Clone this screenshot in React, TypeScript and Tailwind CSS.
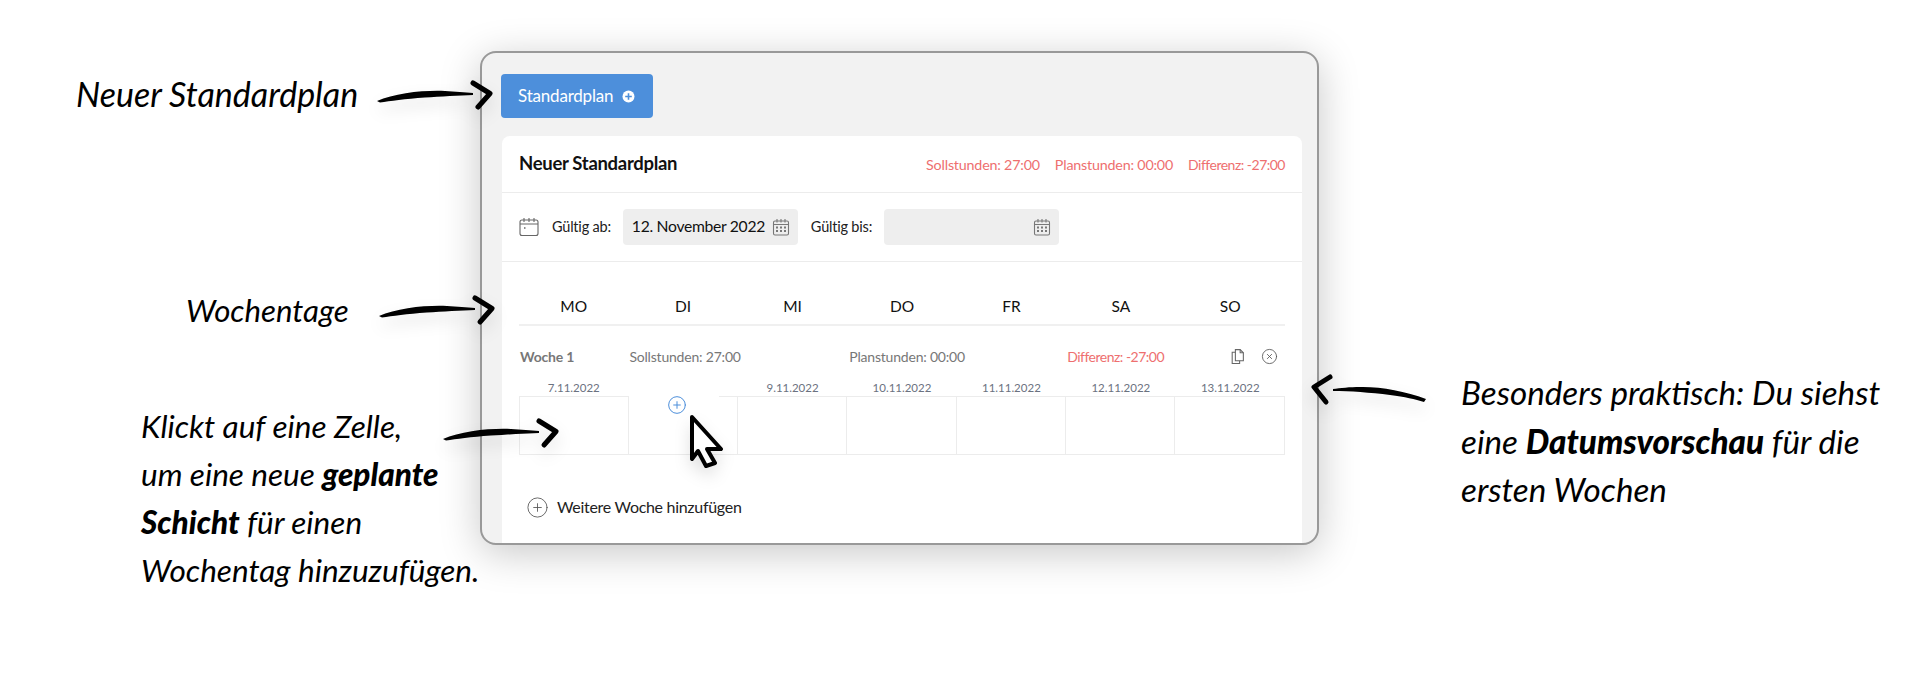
import React from 'react';
import { PlusCircle, XCircle } from 'lucide-react';

const days = ['MO', 'DI', 'MI', 'DO', 'FR', 'SA', 'SO'];
const dates = ['7.11.2022', '', '9.11.2022', '10.11.2022', '11.11.2022', '12.11.2022', '13.11.2022'];

const CalendarIcon = () => (
  <svg width="18" height="18" viewBox="0 0 18 18" fill="none" stroke="#777" strokeWidth="1.1" className="shrink-0">
    <rect x="1.5" y="3" width="15" height="14" rx="1.5" />
    <path d="M1.5 6.5h15M5 1v3.5M9 1v3.5M13 1v3.5" />
    <g fill="#777" stroke="none">
      <rect x="4" y="8.5" width="2" height="2" />
      <rect x="8" y="8.5" width="2" height="2" />
      <rect x="12" y="8.5" width="2" height="2" />
      <rect x="4" y="12" width="2" height="2" />
      <rect x="8" y="12" width="2" height="2" />
      <rect x="12" y="12" width="2" height="2" />
    </g>
  </svg>
);

const BrushArrow = ({ dx, dy }: { dx: number; dy: number }) => (
  <g transform={`translate(${dx} ${dy})`}>
    <path d="M377 101C395 93 425 90 445 91C455 91.500 465 92.500 473 93L473 95C460 95.500 440 96.500 425 97.500C405 99 390 101 380 102.500Z" />
    <path d="M473 83L490 93.500L478 107" fill="none" stroke="#000" strokeWidth="5" strokeLinecap="round" strokeLinejoin="round" />
  </g>
);

const App = () => {
  return (
    <div className="relative w-[1916px] h-[680px] bg-white overflow-hidden pt-[51px] pl-[480px] font-['Lato',sans-serif]">
      {/* App frame */}
      <div className="w-[839px] h-[494px] bg-[#f2f2f2] border-2 border-[#999] rounded-[16px] shadow-[0_8px_40px_rgba(0,0,0,0.22)] overflow-hidden pt-[21px] pl-[20px] pr-[14px]">
        <button className="flex items-center gap-[9px] -ml-px w-[152px] h-[44px] pl-[17px] bg-[#4d8fdb] rounded text-white text-[17px] tracking-[-0.2px]">
          Standardplan
          <svg width="13" height="13" viewBox="0 0 13 13">
            <circle cx="6.5" cy="6.5" r="6" fill="#fff" />
            <path d="M6.5 3.2v6.6M3.2 6.5h6.6" stroke="#4d8fdb" strokeWidth="1.6" />
          </svg>
        </button>

        <div className="mt-[18px] w-[800px] h-[420px] bg-white rounded-t-lg">
          {/* Header */}
          <div className="flex items-center justify-between h-[57px] pl-[17px] pr-[17px] border-b border-[#ececec]">
            <h1 className="text-[18.5px] font-bold text-[#111] tracking-[-0.3px]">Neuer Standardplan</h1>
            <div className="flex gap-[15px] text-[14.3px] tracking-[-0.2px] text-[#ee6f6f] mt-[2px]">
              <span>Sollstunden: 27:00</span>
              <span>Planstunden: 00:00</span>
              <span className="text-[14px] tracking-[-0.5px]">Differenz: -27:00</span>
            </div>
          </div>

          {/* Validity */}
          <div className="flex items-center h-[69px] pl-[17px] border-b border-[#ececec] text-[14.5px] tracking-[-0.2px] text-[#222]">
            <svg width="20" height="20" viewBox="0 0 20 20" fill="none" stroke="#666" strokeWidth="1.1">
              <rect x="1" y="3" width="18" height="15.5" rx="2" />
              <path d="M1 7h18M5 1v4M10 1v4M15 1v4" />
              <path d="M5 11h1.5" strokeWidth="1.5" />
            </svg>
            <span className="ml-[13px]">Gültig ab:</span>
            <div className="flex items-center justify-between ml-[12px] w-[175px] h-[36px] pl-[9px] pr-2 bg-[#eeeeee] rounded text-[15.7px] tracking-[-0.3px] text-[#111]">
              12. November 2022
              <CalendarIcon />
            </div>
            <span className="ml-[13px]">Gültig bis:</span>
            <div className="flex items-center justify-end ml-[12px] w-[175px] h-[36px] pr-2 bg-[#eeeeee] rounded">
              <CalendarIcon />
            </div>
          </div>

          <div className="px-[17px]">
            {/* Weekdays */}
            <div className="grid grid-cols-7 h-[64px] pt-[34px] border-b-2 border-[#f0f0f0] text-center text-[15.5px] leading-5 text-[#111]">
              {days.map((day) => (
                <div key={day}>{day}</div>
              ))}
            </div>

            {/* Week summary */}
            <div className="grid grid-cols-7 items-center mt-[20px] h-[20px] text-[14px] tracking-[-0.2px] text-[#777]">
              <div className="pl-[1px] font-bold">Woche 1</div>
              <div className="col-span-2 pl-[1px]">Sollstunden: 27:00</div>
              <div className="col-span-2 pl-[2px]">Planstunden: 00:00</div>
              <div className="text-[#ee6f6f] whitespace-nowrap pl-[1px] tracking-[-0.5px]">Differenz: -27:00</div>
              <div className="flex justify-end items-center gap-[15px] pr-[7px]">
                <svg width="17" height="17" viewBox="0 0 16 16" fill="none" stroke="#666" strokeWidth="1">
                  <path d="M6 1.500h4.500l3 3v7.500H6z" />
                  <path d="M10.500 1.500v3h3" />
                  <path d="M6 4H3v10.500h7V12" />
                </svg>
                <XCircle size={17} strokeWidth={1.2} color="#555" />
              </div>
            </div>

            {/* Date preview */}
            <div className="grid grid-cols-7 mt-[15px] text-center text-[11.5px] leading-[14px] text-[#6b7280]">
              {dates.map((date, index) => (
                <div key={index} className="h-[15px]">{date}</div>
              ))}
            </div>

            {/* Cells */}
            <div className="grid grid-cols-7 h-[59px] border border-[#ececec]">
              {days.map((day, index) => (
                <div key={day} className="relative border-r border-[#ececec] last:border-r-0">
                  {index === 1 && (
                    <div className="absolute -top-px left-0 w-[90px] h-px bg-white" />
                  )}
                  {index === 1 && (
                    <PlusCircle size={20} strokeWidth={1.2} color="#4d8fdb" className="absolute -top-[2px] left-[38px]" />
                  )}
                </div>
              ))}
            </div>

            {/* Add week */}
            <div className="flex items-center mt-[40px] ml-[7px] text-[16px] tracking-[-0.3px] text-[#222]">
              <PlusCircle size={23} strokeWidth={0.9} color="#555" />
              <span className="ml-[8px]">Weitere Woche hinzufügen</span>
            </div>
          </div>
        </div>
      </div>

      {/* Handwritten annotations */}
      <div className="absolute left-[76px] top-[71px] text-[34px] leading-[46px] italic text-black whitespace-nowrap">
        Neuer Standardplan
      </div>
      <div className="absolute left-[186px] top-[287px] text-[31.2px] leading-[46px] italic text-black whitespace-nowrap">
        Wochentage
      </div>
      <div className="absolute left-[141px] top-[402px] text-[31.5px] leading-[48px] italic text-black whitespace-nowrap">
        Klickt auf eine Zelle,
        <br />
        um eine neue <b className="font-black">geplante</b>
        <br />
        <b className="font-black">Schicht</b> für einen
        <br />
        Wochentag hinzuzufügen.
      </div>
      <div className="absolute left-[1461px] top-[368px] text-[33.2px] leading-[48.5px] italic text-black whitespace-nowrap">
        Besonders praktisch: Du siehst
        <br />
        eine <b className="font-black">Datumsvorschau</b> für die
        <br />
        ersten Wochen
      </div>

      {/* Arrows and cursor */}
      <svg className="absolute inset-0 pointer-events-none drop-shadow-[0_8px_8px_rgba(0,0,0,0.12)]" width="1916" height="680" viewBox="0 0 1916 680">
        <BrushArrow dx={0} dy={0} />
        <BrushArrow dx={2} dy={215} />
        <BrushArrow dx={66} dy={338} />
        <path d="M1426 399C1405 391 1380 386.500 1360 387C1350 387 1340 388 1333 389L1333 391C1350 391 1370 392.500 1390 395C1405 397 1415 399 1424 402Z" />
        <path d="M1330 377L1314 387L1326 402" fill="none" stroke="#000" strokeWidth="5" strokeLinecap="round" strokeLinejoin="round" />
        {/* Cursor */}
        <path d="M692 417L721 449L707 449L715 463L706 466L698 451L692 459Z" fill="#fff" stroke="#000" strokeWidth="4" strokeLinejoin="round" />
      </svg>
    </div>
  );
};

export default App;
